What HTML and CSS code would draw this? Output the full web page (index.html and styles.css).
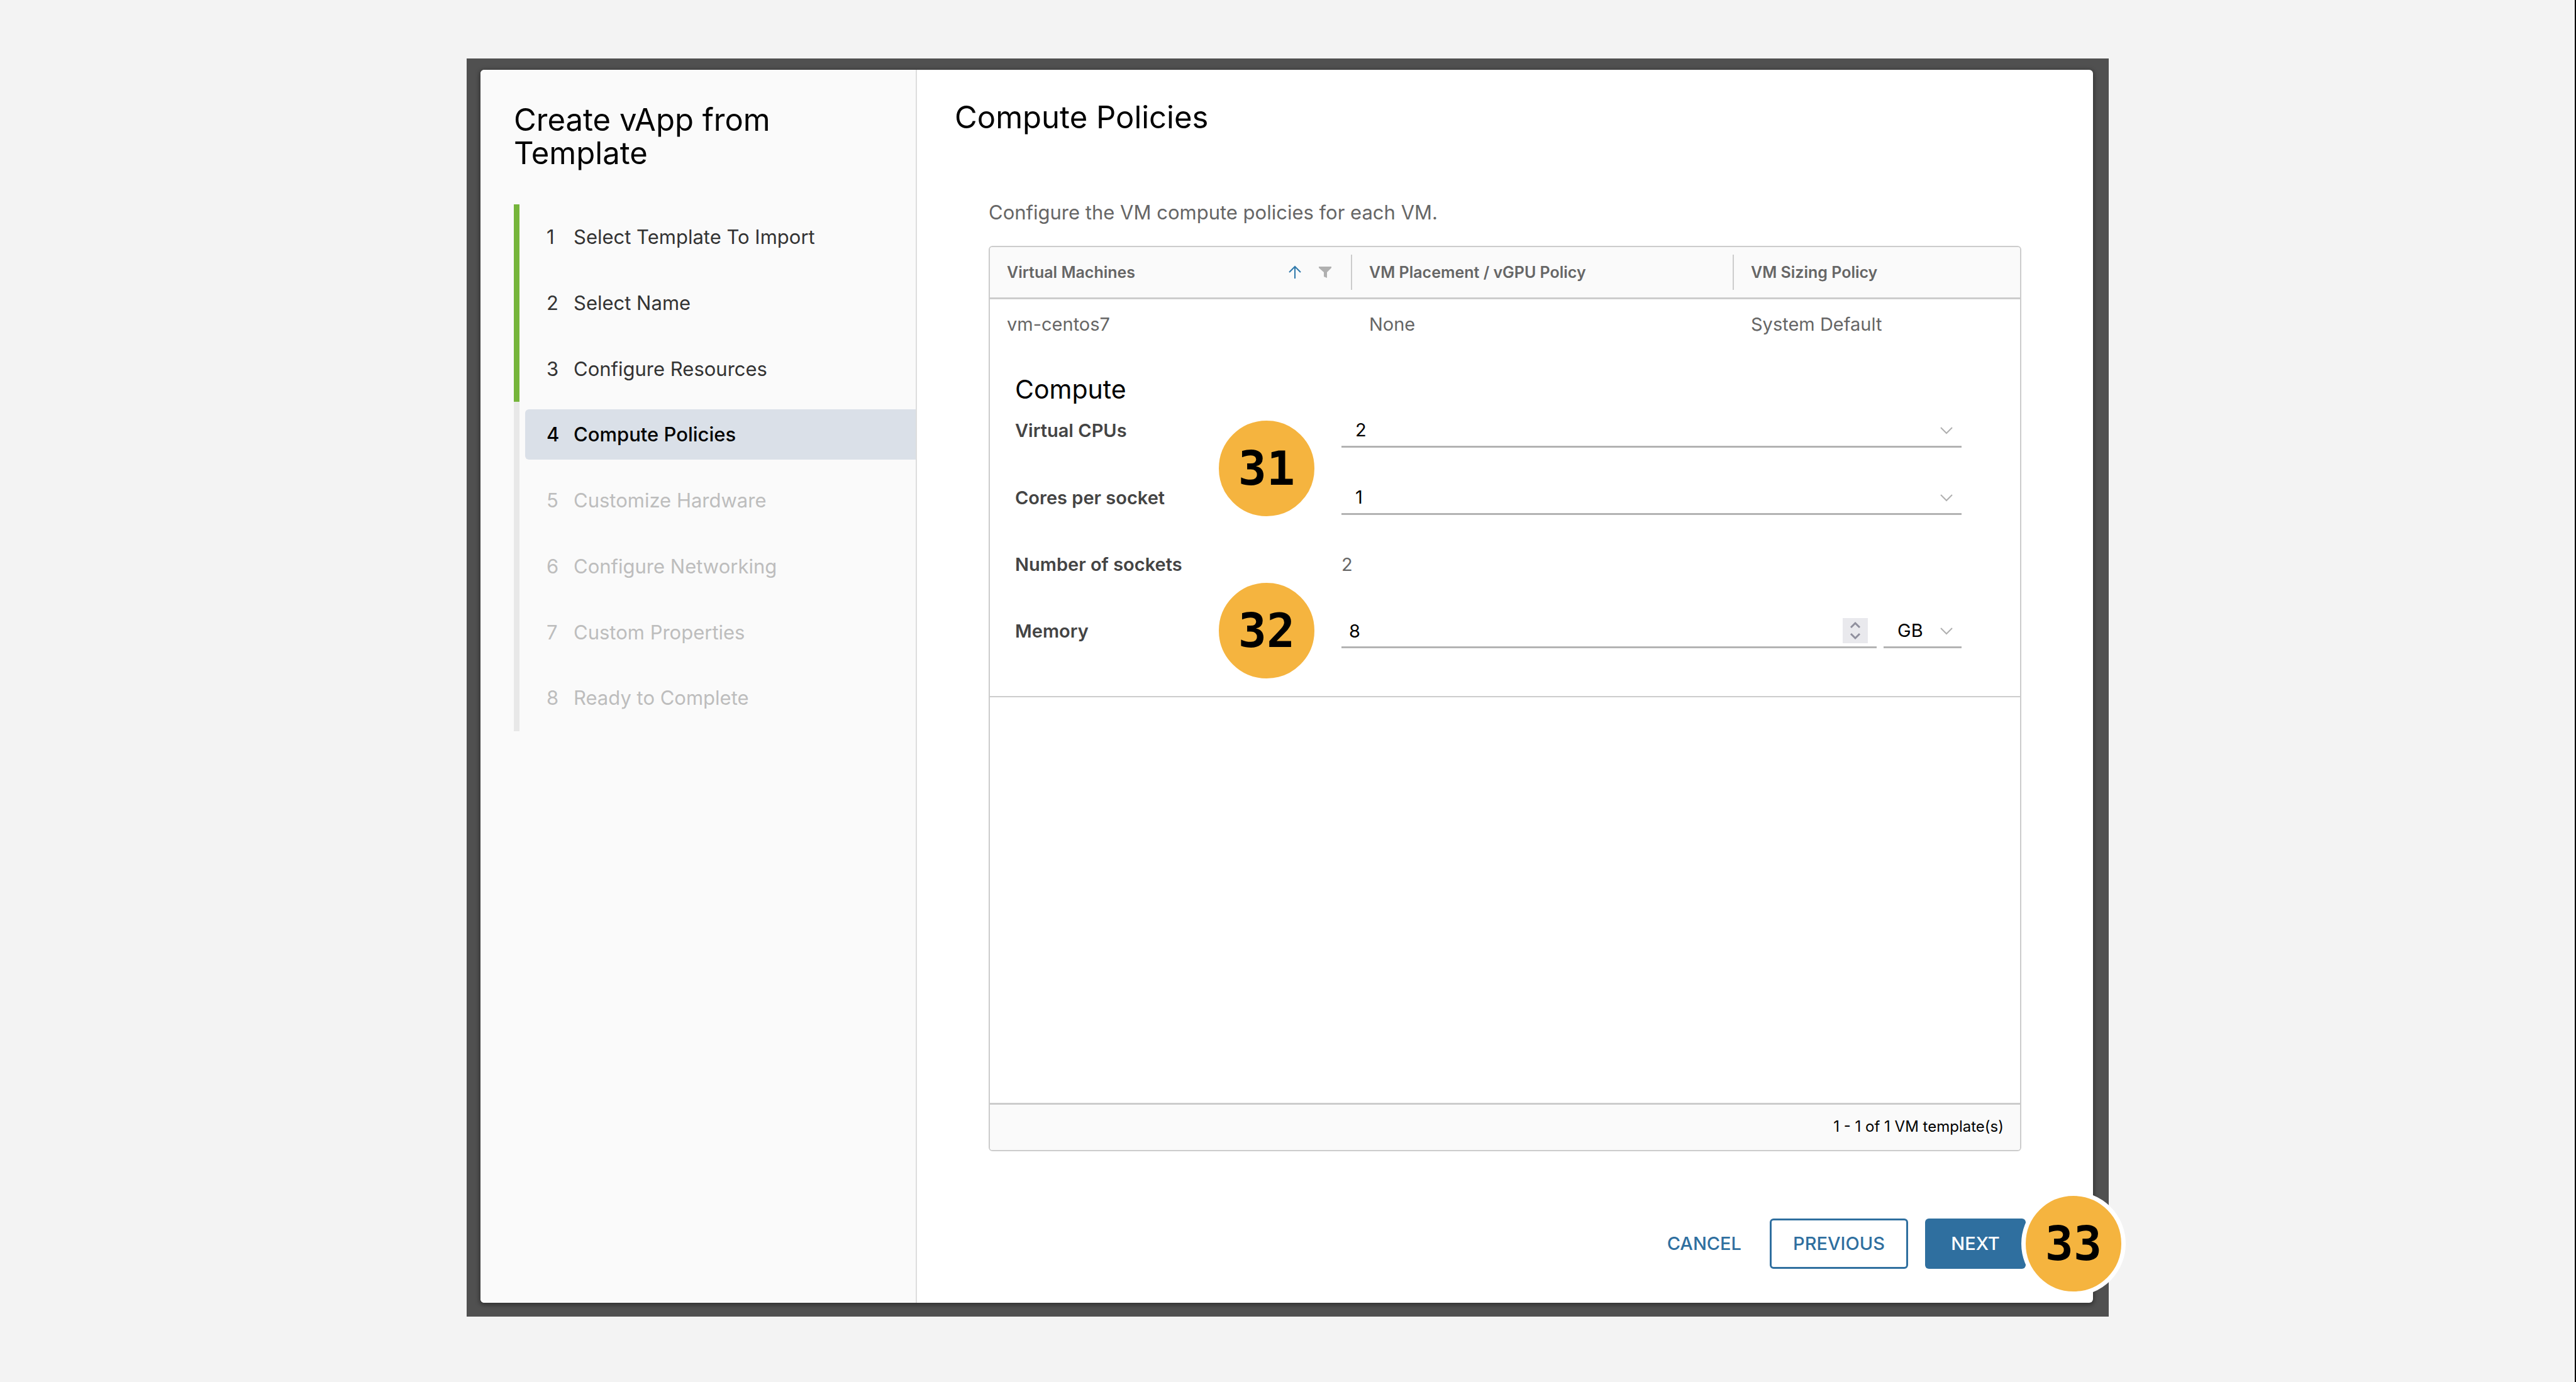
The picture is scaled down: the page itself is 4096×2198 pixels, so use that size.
FILE: index.html
```html
<!DOCTYPE html>
<html lang="en">
<head>
<meta charset="utf-8">
<title>Create vApp from Template</title>
<link rel="stylesheet" href="styles.css">
</head>
<body>
<div class="backdrop">
  <div class="dialog" role="dialog" aria-labelledby="wizard-title">
    <nav class="sidebar">
      <h1 class="sidebar-title" id="wizard-title">Create vApp from Template</h1>
      <ol class="steps">
        <li class="step done"><button type="button" class="step-button"><span class="step-number">1</span>Select Template To Import</button></li>
        <li class="step done"><button type="button" class="step-button"><span class="step-number">2</span>Select Name</button></li>
        <li class="step done"><button type="button" class="step-button"><span class="step-number">3</span>Configure Resources</button></li>
        <li class="step current"><button type="button" class="step-button" aria-current="step"><span class="step-number">4</span>Compute Policies</button></li>
        <li class="step"><button type="button" class="step-button" disabled><span class="step-number">5</span>Customize Hardware</button></li>
        <li class="step"><button type="button" class="step-button" disabled><span class="step-number">6</span>Configure Networking</button></li>
        <li class="step"><button type="button" class="step-button" disabled><span class="step-number">7</span>Custom Properties</button></li>
        <li class="step"><button type="button" class="step-button" disabled><span class="step-number">8</span>Ready to Complete</button></li>
      </ol>
    </nav>
    <main class="page">
      <h2 class="page-title">Compute Policies</h2>
      <div class="page-body">
        <p class="intro">Configure the VM compute policies for each VM.</p>
        <div class="datagrid">
          <table class="grid-table">
            <colgroup><col class="col-vm"><col class="col-placement"><col class="col-sizing"></colgroup>
            <thead>
              <tr>
                <th scope="col">
                  <div class="head-cell">
                    <span class="head-text">Virtual Machines</span>
                    <button type="button" class="icon-button" aria-label="Sort">
                      <svg class="icon" width="24" height="24" viewBox="0 0 24 24"><path d="M12 22V3M3 12l9-9 9 9" fill="none" stroke="#2f79ab" stroke-width="2"/></svg>
                    </button>
                    <button type="button" class="icon-button" aria-label="Filter">
                      <svg class="icon" width="24" height="24" viewBox="0 0 24 24"><path d="M2 3h20v2l-7 7v9l-5-2v-7L2 5z" fill="#b0b0b0"/></svg>
                    </button>
                  </div>
                </th>
                <th scope="col"><div class="head-cell"><span class="head-text">VM Placement / vGPU Policy</span></div></th>
                <th scope="col"><div class="head-cell"><span class="head-text">VM Sizing Policy</span></div></th>
              </tr>
            </thead>
            <tbody>
              <tr class="vm-row"><td>vm-centos7</td><td>None</td><td>System Default</td></tr>
              <tr class="detail-row">
                <td colspan="3">
                  <h3 class="section-title">Compute</h3>
                  <form class="compute-form">
                    <label class="field-label" for="cpus">Virtual CPUs</label>
                    <div class="control">
                      <select class="select" id="cpus"><option>1</option><option selected>2</option><option>4</option></select>
                      <svg class="chevron" width="20" height="14" viewBox="0 0 20 14"><path d="M1 2l9 9 9-9" fill="none" stroke="#b0b0b0" stroke-width="2"/></svg>
                    </div>
                    <label class="field-label" for="cores">Cores per socket</label>
                    <div class="control">
                      <select class="select" id="cores"><option selected>1</option><option>2</option></select>
                      <svg class="chevron" width="20" height="14" viewBox="0 0 20 14"><path d="M1 2l9 9 9-9" fill="none" stroke="#b0b0b0" stroke-width="2"/></svg>
                    </div>
                    <label class="field-label" for="sockets">Number of sockets</label>
                    <output class="static-value" id="sockets">2</output>
                    <label class="field-label" for="memory">Memory</label>
                    <div class="memory">
                      <div class="control memory-amount">
                        <input class="number" id="memory" type="number" value="8" min="1">
                        <span class="spinner"><svg width="40" height="40" viewBox="0 0 40 40"><path d="M13 15l7-7 7 7M13 25l7 7 7-7" fill="none" stroke="#8f8f9d" stroke-width="3"/></svg></span>
                      </div>
                      <div class="control memory-unit">
                        <select class="select" id="unit" aria-label="Memory unit"><option>MB</option><option selected>GB</option></select>
                        <svg class="chevron" width="20" height="14" viewBox="0 0 20 14"><path d="M1 2l9 9 9-9" fill="none" stroke="#b0b0b0" stroke-width="2"/></svg>
                      </div>
                    </div>
                    <span class="badge badge-cpu">31</span>
                    <span class="badge badge-memory">32</span>
                  </form>
                </td>
              </tr>
            </tbody>
          </table>
          <div class="grid-footer">1 - 1 of 1 VM template(s)</div>
        </div>
      </div>
      <div class="actions">
        <button type="button" class="button link">CANCEL</button>
        <button type="button" class="button outline">PREVIOUS</button>
        <div class="next-wrap">
          <button type="button" class="button primary">NEXT</button>
          <span class="badge badge-next">33</span>
        </div>
      </div>
    </main>
  </div>
</div>
</body>
</html>
```
FILE: styles.css
```css
* { box-sizing: border-box; }

body {
  margin: 0;
  min-height: 100vh;
  padding: 93px 741px 104px 742px;
  display: flex;
  background: #f3f3f3;
  border-right: 2px solid #000;
  font-family: Inter, "Open Sans", sans-serif;
  font-size: 31px;
  line-height: 40px;
  color: #666;
}

h1, h2, h3, p, ol { margin: 0; padding: 0; font-weight: 400; }
button, select, input { font: inherit; color: inherit; margin: 0; }

.backdrop {
  flex: 1;
  display: flex;
  padding: 18px 25px 22px 22px;
  background: #505050;
}

.dialog {
  flex: 1;
  display: flex;
  background: #fff;
  border-radius: 6px;
  box-shadow: 0 2px 6px 2px rgba(0, 0, 0, 0.35);
}

/* Wizard steps */
.sidebar {
  flex: 0 0 694px;
  padding: 53px 0 53px 53px;
  background: #fafafa;
  border-right: 2px solid #ddd;
  border-radius: 6px 0 0 6px;
}

.sidebar-title {
  margin-bottom: 55px;
  padding-right: 100px;
  font-size: 49px;
  line-height: 53px;
  color: #000;
}

.steps {
  display: grid;
  grid-auto-rows: 1fr;
  height: 838px;
  list-style: none;
}

.step {
  padding: 12px 0 0 9px;
  border-left: 9px solid #e8e8e8;
  color: #bdbdbd;
}
.step.done { border-left-color: #76b53b; color: #333; }
.step.current { color: #000; font-weight: 500; }

.step-button {
  display: flex;
  align-items: center;
  width: 100%;
  height: 80px;
  padding: 0 0 0 34px;
  border: 0;
  border-radius: 6px 0 0 6px;
  background: none;
  text-align: left;
}
.current .step-button { background: #dae0e8; }
.step-number { width: 43px; }

/* Page */
.page {
  flex: 1;
  display: flex;
  flex-direction: column;
  padding: 48px 107px 54px 60px;
}
.page-title {
  margin-bottom: 103px;
  font-size: 49px;
  line-height: 56px;
  color: #000;
}
.page-body {
  flex: 1;
  display: flex;
  flex-direction: column;
  padding: 0 7px 0 54px;
}
.intro { margin-bottom: 33px; }

.datagrid {
  flex: 1;
  display: flex;
  flex-direction: column;
  border: 2px solid #ccc;
  border-radius: 6px;
  overflow: hidden;
}
.grid-table {
  width: 100%;
  table-layout: fixed;
  border-collapse: separate;
  border-spacing: 0;
}
.col-vm { width: 576px; }
.col-placement { width: 607px; }

th {
  padding: 12px 0;
  background: #fafafa;
  border-bottom: 3px solid #ccc;
  text-align: left;
  font-size: 25px;
  font-weight: 600;
}
.head-cell {
  display: flex;
  align-items: center;
  gap: 24px;
  height: 56px;
  padding: 0 29px 0 27px;
  border-right: 2px solid #ccc;
}
th:last-child .head-cell { border-right: 0; }
.head-text { flex: 1; }
.icon-button {
  display: flex;
  padding: 0;
  border: 0;
  background: none;
}

td { padding: 0 0 0 27px; }
.vm-row { height: 80px; font-size: 29px; }
.detail-row td {
  padding: 39px 93px 76px 40px;
  border-bottom: 2px solid #ccc;
}
.section-title {
  margin-bottom: 15px;
  font-size: 41px;
  line-height: 48px;
  color: #000;
}

.compute-form {
  position: relative;
  display: grid;
  grid-template-columns: 519px 1fr;
  row-gap: 53px;
  align-items: center;
  font-size: 29px;
}
.field-label { font-weight: 600; color: #444; }
.control {
  position: relative;
  height: 54px;
  border-bottom: 3px solid #b3b3b3;
  color: #000;
}
.select, .number {
  appearance: none;
  width: 100%;
  height: 52px;
  padding: 0 22px;
  border: 0;
  background: none;
}
.number { padding: 0 12px; appearance: textfield; }
.number::-webkit-inner-spin-button { display: none; }
.chevron {
  position: absolute;
  right: 14px;
  top: 20px;
  pointer-events: none;
}
.static-value { line-height: 52px; }
.memory { display: flex; gap: 11px; }
.memory-amount { flex: 1; }
.memory-unit { width: 124px; }
.spinner {
  position: absolute;
  right: 14px;
  top: 6px;
  display: flex;
  background: #e9e9ed;
}

.grid-footer {
  margin-top: auto;
  padding: 15px 26px 17px;
  border-top: 3px solid #ccc;
  background: #fafafa;
  text-align: right;
  font-size: 24px;
  color: #000;
}

/* Buttons */
.actions {
  display: flex;
  justify-content: flex-end;
  gap: 27px;
  margin-top: 107px;
}
.button {
  height: 80px;
  padding: 0 15px;
  border: 3px solid transparent;
  border-radius: 6px;
  background: none;
  font-size: 29px;
  font-weight: 500;
  color: #2f6f9f;
}
.outline { width: 220px; border-color: #2f6f9f; }
.primary { width: 160px; background: #2f6f9f; color: #fff; }
.next-wrap { position: relative; }

/* Numbered callouts */
.badge {
  position: absolute;
  display: flex;
  align-items: center;
  justify-content: center;
  width: 166px;
  height: 166px;
  border: 7px solid #fff;
  border-radius: 50%;
  background: #f5b43f;
  font-family: "DejaVu Sans Mono", monospace;
  font-size: 75px;
  font-weight: 700;
  color: #000;
}
.badge-cpu { left: 317px; top: 4px; }
.badge-memory { left: 317px; top: 262px; }
.badge-next { left: 153px; top: -43px; }
```
